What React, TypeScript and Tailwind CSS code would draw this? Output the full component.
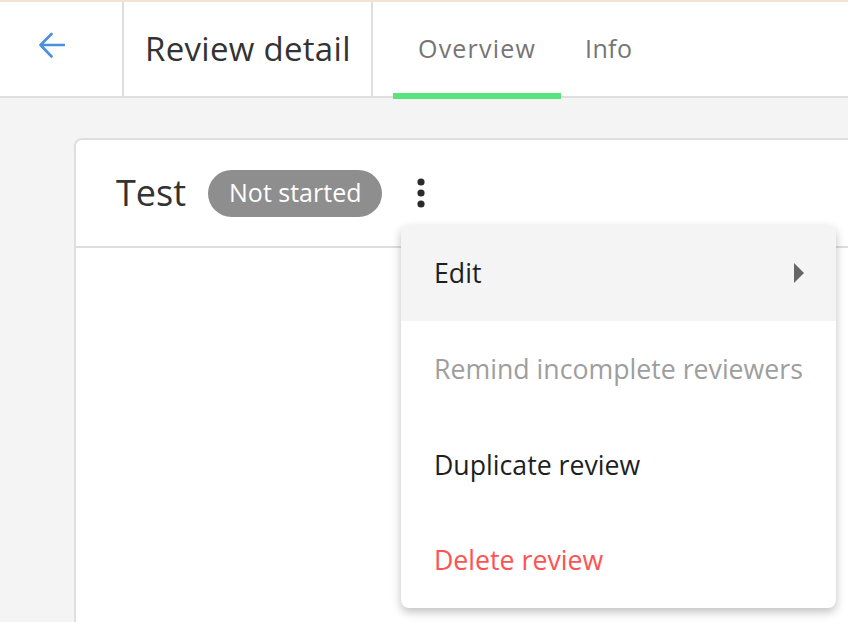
import React from "react";

const font = { fontFamily: '"Open Sans", "Noto Sans", sans-serif' };

const BackArrow = () => (
  <svg width="26" height="26" viewBox="0 0 26 26" fill="none">
    <path
      d="M1.5 13 H25 M12.5 2 L1.5 13 L12.5 24.5"
      stroke="#4a8fe0"
      strokeWidth="2.6"
      strokeLinecap="round"
      strokeLinejoin="round"
    />
  </svg>
);

const Kebab = () => (
  <svg width="8" height="30" viewBox="0 0 8 30" fill="#2b2b2b">
    <circle cx="4" cy="4" r="3.6" />
    <circle cx="4" cy="15" r="3.6" />
    <circle cx="4" cy="26" r="3.6" />
  </svg>
);

const menuItems = [
  { label: "Edit", cls: "text-[#1f1f1f] bg-[#f4f4f4] h-[96px]", sub: true },
  { label: "Remind incomplete reviewers", cls: "text-[#9e9e9e] h-[96px]" },
  { label: "Duplicate review", cls: "text-[#1f1f1f] h-[96px]" },
  { label: "Delete review", cls: "text-[#ff5252] h-[95px]" },
];

export default function App() {
  return (
    <div className="h-screen overflow-hidden flex flex-col bg-[#f4f4f4]" style={font}>
      <div className="h-[2px] shrink-0 bg-[#f2e3d3]" />
      <header className="h-[96px] shrink-0 flex bg-white border-b-2 border-[#dedede]">
        <div className="w-[124px] border-r-2 border-[#dedede] pl-[39px] pt-[30px]">
          <BackArrow />
        </div>
        <div className="w-[249px] border-r-2 border-[#dedede] flex items-center pl-[21px]">
          <span className="text-[33px] text-[#333] tracking-[0.3px]">Review detail</span>
        </div>
        <nav className="flex pl-[20px]">
          <div className="relative flex items-center px-[25px]">
            <span className="text-[25px] text-[#757575] tracking-[1.2px]">Overview</span>
            <div className="absolute left-0 right-0 bottom-[-3px] h-[6px] bg-[#58e47b]" />
          </div>
          <div className="flex items-center px-[24px]">
            <span className="text-[25px] text-[#757575] tracking-[0.4px]">Info</span>
          </div>
        </nav>
      </header>

      <main className="flex-1 min-h-0 overflow-hidden pl-[74px] pt-[40px]">
        <div className="relative w-[820px] h-[520px] bg-white border-2 border-[#dedede] rounded-[8px]">
          <div className="h-[108px] flex items-center pl-[40px] border-b-2 border-[#dedede]">
            <span className="text-[36px] text-[#333] leading-none">Test</span>
            <span className="ml-[22px] h-[47px] px-[21px] flex items-center rounded-full bg-[#8e8e8e] text-white text-[25px]">
              Not started
            </span>
            <span className="ml-[35px] flex items-center">
              <Kebab />
            </span>
          </div>

          <div className="absolute left-[325px] top-[85px] w-[435px] bg-white rounded-[8px] shadow-[0_4px_10px_rgba(0,0,0,0.25)] overflow-hidden">
            {menuItems.map((item) => (
              <div
                key={item.label}
                className={`flex items-center justify-between pl-[33px] pr-[32px] text-[26.7px] ${item.cls}`}
              >
                <span>{item.label}</span>
                {item.sub && (
                  <svg width="10" height="20" viewBox="0 0 10 20" fill="#666">
                    <path d="M0 0 L10 10 L0 20 Z" />
                  </svg>
                )}
              </div>
            ))}
          </div>
        </div>
      </main>
    </div>
  );
}
